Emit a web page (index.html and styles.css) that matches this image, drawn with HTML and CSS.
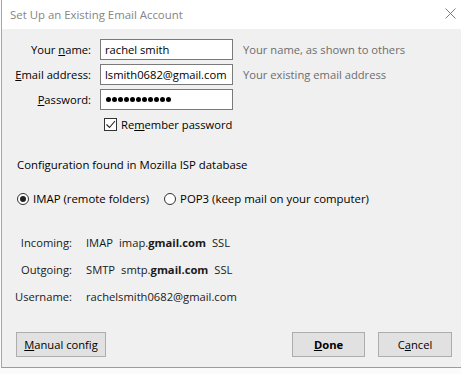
FILE: index.html
```html
<!DOCTYPE html>
<html>
<head>
<meta charset="utf-8">
<link rel="stylesheet" href="styles.css">
</head>
<body>
<div class="window">
  <div class="titlebar">
    <span class="title">Set Up an Existing Email Account</span>
    <svg class="close" width="11" height="11" viewBox="0 0 11 11"><path d="M0.5 0.5 L10.5 10.5 M10.5 0.5 L0.5 10.5" stroke="#7a7a7a" stroke-width="1" fill="none"/></svg>
  </div>
  <div class="content">
    <div class="form">
      <label class="lbl">Your <u>n</u>ame:</label>
      <div class="input">rachel smith</div>
      <span class="hint">Your name, as shown to others</span>

      <label class="lbl"><u>E</u>mail address:</label>
      <div class="input">lsmith0682@gmail.com</div>
      <span class="hint">Your existing email address</span>

      <label class="lbl"><u>P</u>assword:</label>
      <div class="input dots"><i></i><i></i><i></i><i></i><i></i><i></i><i></i><i></i><i></i><i></i><i></i></div>
      <span class="hint"></span>

      <span></span>
      <div class="check"><span class="box"><svg width="11" height="11" viewBox="0 0 11 11"><path d="M1.5 5.5 L4.5 8.5 L10 2" stroke="#222" stroke-width="1.1" fill="none"/></svg></span>Re<u>m</u>ember password</div>
      <span></span>
    </div>

    <p class="found">Configuration found in Mozilla ISP database</p>

    <div class="radios">
      <div class="radio"><span class="circle on"></span>IMAP (remote folders)</div>
      <div class="radio"><span class="circle"></span>POP3 (keep mail on your computer)</div>
    </div>

    <div class="info">
      <span class="ilbl">Incoming:</span>
      <span class="ival"><span>IMAP</span><span>imap.<b>gmail.com</b></span><span>SSL</span></span>
      <span class="ilbl">Outgoing:</span>
      <span class="ival"><span>SMTP</span><span>smtp.<b>gmail.com</b></span><span>SSL</span></span>
      <span class="ilbl">Username:</span>
      <span class="ival user">rachelsmith0682@gmail.com</span>
    </div>

    <div class="buttons">
      <button class="btn manual"><u>M</u>anual config</button>
      <div class="right">
        <button class="btn done"><u>D</u>one</button>
        <button class="btn cancel">C<u>a</u>ncel</button>
      </div>
    </div>
  </div>
</div>
</body>
</html>
```
FILE: styles.css
```css
* { box-sizing: border-box; }
html, body { margin: 0; padding: 0; }
body {
  background: #fbfbfb;
  font-family: "Open Sans", "Noto Sans", sans-serif;
  font-size: 11.2px;
  color: #000;
  width: 461px;
  height: 374px;
  overflow: hidden;
}
.window {
  margin-left: 1px;
  width: 470px;
  border-left: 1px solid #a6a6a6;
}
.titlebar {
  height: 29px;
  background: #fff;
  display: flex;
  align-items: center;
  padding-left: 8px;
  position: relative;
}
.title {
  color: #858585;
  font-size: 11.4px;
  margin-top: -1px;
}
.close {
  position: absolute;
  left: 443px;
  top: 8px;
}
.content {
  background: #f0f0f0;
  height: 339px;
  border-bottom: 1px solid #9c9c9c;
  padding-top: 10px;
}
.form {
  display: grid;
  grid-template-columns: 89px 133px auto;
  grid-auto-rows: 21px;
  column-gap: 9px;
  row-gap: 4px;
  align-items: center;
}
.lbl {
  justify-self: end;
  grid-column: 1;
  white-space: nowrap;
}
.input {
  height: 21px;
  background: #fff;
  border: 1px solid #7a7a7a;
  padding-left: 4px;
  display: flex;
  align-items: center;
  white-space: nowrap;
  overflow: hidden;
}
.dots { gap: 1px; padding-left: 5px; }
.dots i {
  display: block;
  width: 5px;
  height: 5px;
  border-radius: 50%;
  background: #000;
}
.hint {
  color: #6d6d6d;
  margin-left: 1px;
  white-space: nowrap;
}
.check {
  display: flex;
  align-items: center;
  padding-left: 4px;
  white-space: nowrap;
}
.box {
  width: 13px;
  height: 13px;
  border: 1px solid #333;
  background: #fff;
  margin-right: 4px;
  display: flex;
  align-items: center;
  justify-content: center;
}
.found {
  margin: 22px 0 0 15px;
  line-height: 15px;
  font-size: 11.35px;
}
.radios {
  display: flex;
  gap: 15px;
  margin-top: 19px;
  padding-left: 15px;
  line-height: 15px;
  font-size: 11.4px;
}
.radio {
  display: flex;
  align-items: center;
  white-space: nowrap;
}
.circle {
  width: 12px;
  height: 12px;
  border: 1px solid #333;
  border-radius: 50%;
  background: #fff;
  margin-right: 4px;
  display: flex;
  align-items: center;
  justify-content: center;
}
.circle.on::after {
  content: "";
  width: 6px;
  height: 6px;
  border-radius: 50%;
  background: #222;
}
.info {
  display: grid;
  grid-template-columns: 70px auto;
  column-gap: 14px;
  row-gap: 12px;
  margin-top: 29px;
  line-height: 15px;
  color: #1a1a1a;
}
.ilbl { justify-self: end; }
.ival { display: flex; gap: 6px; white-space: nowrap; }
.buttons {
  display: flex;
  justify-content: space-between;
  margin-top: 28px;
  padding-left: 14px;
  padding-right: 19px;
}
.right { display: flex; gap: 13px; }
.btn {
  font: inherit;
  color: #000;
  height: 25px;
  background: #e1e1e1;
  border: 1px solid #adadad;
  padding: 0;
}
.manual { width: 90px; }
.done { width: 73px; font-weight: bold; }
.cancel { width: 74px; }
```
